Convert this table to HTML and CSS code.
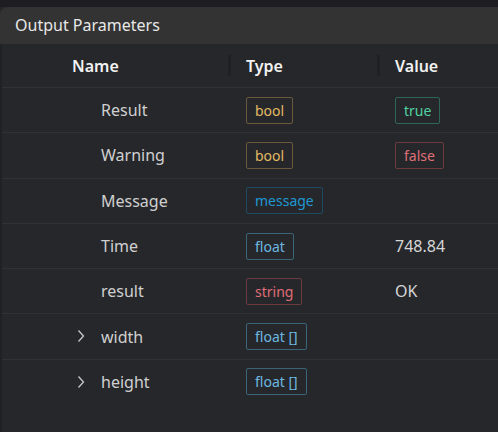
FILE: index.html
```html
<!DOCTYPE html>
<html>
<head>
<meta charset="utf-8">
<link rel="stylesheet" href="styles.css">
</head>
<body>
<div class="panel">
  <div class="title">Output Parameters</div>
  <div class="table">
    <div class="row head">
      <div class="cell c1"><span class="hname">Name</span><span class="sep"></span></div>
      <div class="cell c2">Type<span class="sep"></span></div>
      <div class="cell c3">Value</div>
    </div>
    <div class="row">
      <div class="cell c1"><span class="name">Result</span></div>
      <div class="cell c2"><span class="badge b-bool">bool</span></div>
      <div class="cell c3"><span class="badge b-true">true</span></div>
    </div>
    <div class="row">
      <div class="cell c1"><span class="name">Warning</span></div>
      <div class="cell c2"><span class="badge b-bool">bool</span></div>
      <div class="cell c3"><span class="badge b-false">false</span></div>
    </div>
    <div class="row">
      <div class="cell c1"><span class="name">Message</span></div>
      <div class="cell c2"><span class="badge b-msg">message</span></div>
      <div class="cell c3"></div>
    </div>
    <div class="row">
      <div class="cell c1"><span class="name">Time</span></div>
      <div class="cell c2"><span class="badge b-float">float</span></div>
      <div class="cell c3 val">748.84</div>
    </div>
    <div class="row">
      <div class="cell c1"><span class="name">result</span></div>
      <div class="cell c2"><span class="badge b-str">string</span></div>
      <div class="cell c3 val">OK</div>
    </div>
    <div class="row">
      <div class="cell c1"><svg class="chev" width="8" height="14" viewBox="0 0 8 14"><path d="M1.5 1.5 L6.5 7 L1.5 12.5" fill="none" stroke="#c8c8c8" stroke-width="1.3"/></svg><span class="name">width</span></div>
      <div class="cell c2"><span class="badge b-float">float []</span></div>
      <div class="cell c3"></div>
    </div>
    <div class="row last">
      <div class="cell c1"><svg class="chev" width="8" height="14" viewBox="0 0 8 14"><path d="M1.5 1.5 L6.5 7 L1.5 12.5" fill="none" stroke="#c8c8c8" stroke-width="1.3"/></svg><span class="name">height</span></div>
      <div class="cell c2"><span class="badge b-float">float []</span></div>
      <div class="cell c3"></div>
    </div>
  </div>
</div>
</body>
</html>
```
FILE: styles.css
```css
html, body {
  margin: 0;
  padding: 0;
  background: #26272b;
}
body {
  font-family: "Segoe UI", "Noto Sans", "Open Sans", sans-serif;
  color: #d4d4d4;
  height: 432px;
  overflow: hidden;
}
.panel {
  border-top: 7px solid #1e1e22;
  height: 425px;
  background: #26272b;
}
.title {
  height: 37px;
  background: #333333;
  border-top-left-radius: 8px;
  color: #e8e8e8;
  font-size: 16px;
  line-height: 37px;
  padding-left: 15px;
}
.table {
  border-left: 2px solid #202125;
  height: 388px;
}
.row {
  display: grid;
  grid-template-columns: 228px 149px 1fr;
  height: 44.3px;
  border-bottom: 1px solid #303136;
  align-items: center;
}
.row.head {
  height: 43px;
}
.row.last {
  border-bottom: none;
}
.cell {
  display: flex;
  align-items: center;
  height: 100%;
  position: relative;
  font-size: 16px;
}
.head .cell {
  font-weight: 600;
  color: #f2f2f2;
}
.c1 { padding-left: 99px; }
.head .c1 { padding-left: 70px; }
.c2, .c3 { padding-left: 16px; }
.sep {
  position: absolute;
  right: -1px;
  top: 11px;
  width: 3px;
  height: 21px;
  background: #1f2023;
}
.chev {
  position: absolute;
  left: 75px;
  top: 15px;
}
.name { color: #d0d0d0; }
.val { color: #d6d6d6; }
.badge {
  display: inline-block;
  font-size: 14px;
  line-height: 25px;
  padding: 0 8px;
  border: 1px solid;
  border-radius: 2px;
}
.b-bool { color: #e2b964; border-color: #6a5a3d; }
.b-true { color: #4fd1a1; border-color: #2f6555; }
.b-false { color: #df6f76; border-color: #6b3b40; }
.b-msg { color: #1f98d3; border-color: #1e4b62; }
.b-float { color: #6cb8e0; border-color: #3a6579; }
.b-str { color: #e06d75; border-color: #6b3b40; }
```
